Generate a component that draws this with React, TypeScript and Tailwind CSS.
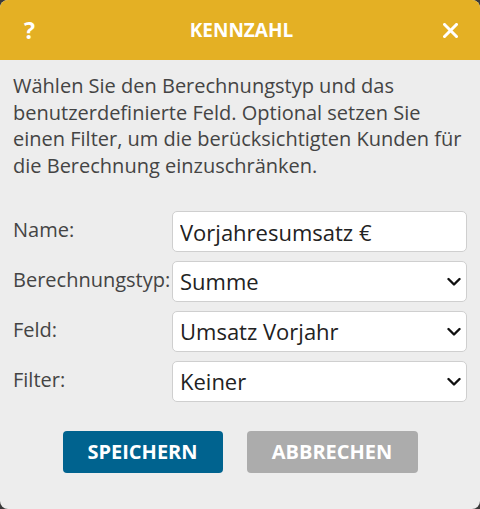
import { useState } from "react";

const fields = [
  { label: "Berechnungstyp:", value: "Summe" },
  { label: "Feld:", value: "Umsatz Vorjahr" },
  { label: "Filter:", value: "Keiner" },
];

function Chevron() {
  return (
    <svg width="14" height="9" viewBox="0 0 14 9" className="absolute right-[6px] top-1/2 -translate-y-1/2 pointer-events-none">
      <path d="M1.5 1.5 L7 7 L12.5 1.5" fill="none" stroke="#111" strokeWidth="2.4" strokeLinecap="round" strokeLinejoin="round" />
    </svg>
  );
}

export default function App() {
  const [name, setName] = useState("Vorjahresumsatz €");

  return (
    <div className="w-[480px] h-[509px] bg-[#3a3a3a] font-['Open_Sans',sans-serif]">
      <div className="w-full h-full bg-[#ededed] rounded-[8px] overflow-hidden flex flex-col">
        {/* header */}
        <div className="h-[60px] bg-[#e4b024] flex items-center justify-between pl-[24px] pr-[22px] text-white font-bold shrink-0">
          <span className="text-[23px] w-[16px]">?</span>
          <span className="text-[19px]">KENNZAHL</span>
          <svg width="15" height="15" viewBox="0 0 15 15">
            <path d="M1.5 1.5 L13.5 13.5 M13.5 1.5 L1.5 13.5" stroke="white" strokeWidth="3" strokeLinecap="square" />
          </svg>
        </div>

        <div className="px-[13px] pt-[13px]">
          <p className="text-[20px] leading-[26.5px] text-[#444]">
            Wählen Sie den Berechnungstyp und das benutzerdefinierte Feld. Optional setzen Sie einen Filter, um die berücksichtigten Kunden für die Berechnung einzuschränken.
          </p>

          <div className="mt-[32px] flex flex-col gap-[9px]">
            <div className="flex items-center">
              <label className="w-[159px] text-[20px] text-[#444] -mt-[4px]">Name:</label>
              <input
                className="w-[295px] h-[41px] bg-white border border-[#cfcfcf] rounded-[5px] px-[7px] text-[22px] text-[#222] outline-none"
                value={name}
                onChange={(e) => setName(e.target.value)}
              />
            </div>
            {fields.map((f) => (
              <div key={f.label} className="flex items-center">
                <label className="w-[159px] text-[20px] text-[#444] -mt-[4px] whitespace-nowrap">{f.label}</label>
                <div className="relative w-[295px] h-[41px]">
                  <select
                    defaultValue={f.value}
                    className="appearance-none w-full h-full bg-white border border-[#cfcfcf] rounded-[5px] px-[7px] text-[22px] text-[#222] outline-none"
                  >
                    <option>{f.value}</option>
                  </select>
                  <Chevron />
                </div>
              </div>
            ))}
          </div>

          <div className="mt-[29px] flex justify-center gap-[24px]">
            <button className="w-[160px] h-[42px] rounded-[4px] bg-[#00638f] text-white font-bold text-[20px]">
              SPEICHERN
            </button>
            <button className="w-[171px] h-[42px] rounded-[4px] bg-[#acacac] text-white font-bold text-[20px]">
              ABBRECHEN
            </button>
          </div>
        </div>
      </div>
    </div>
  );
}
